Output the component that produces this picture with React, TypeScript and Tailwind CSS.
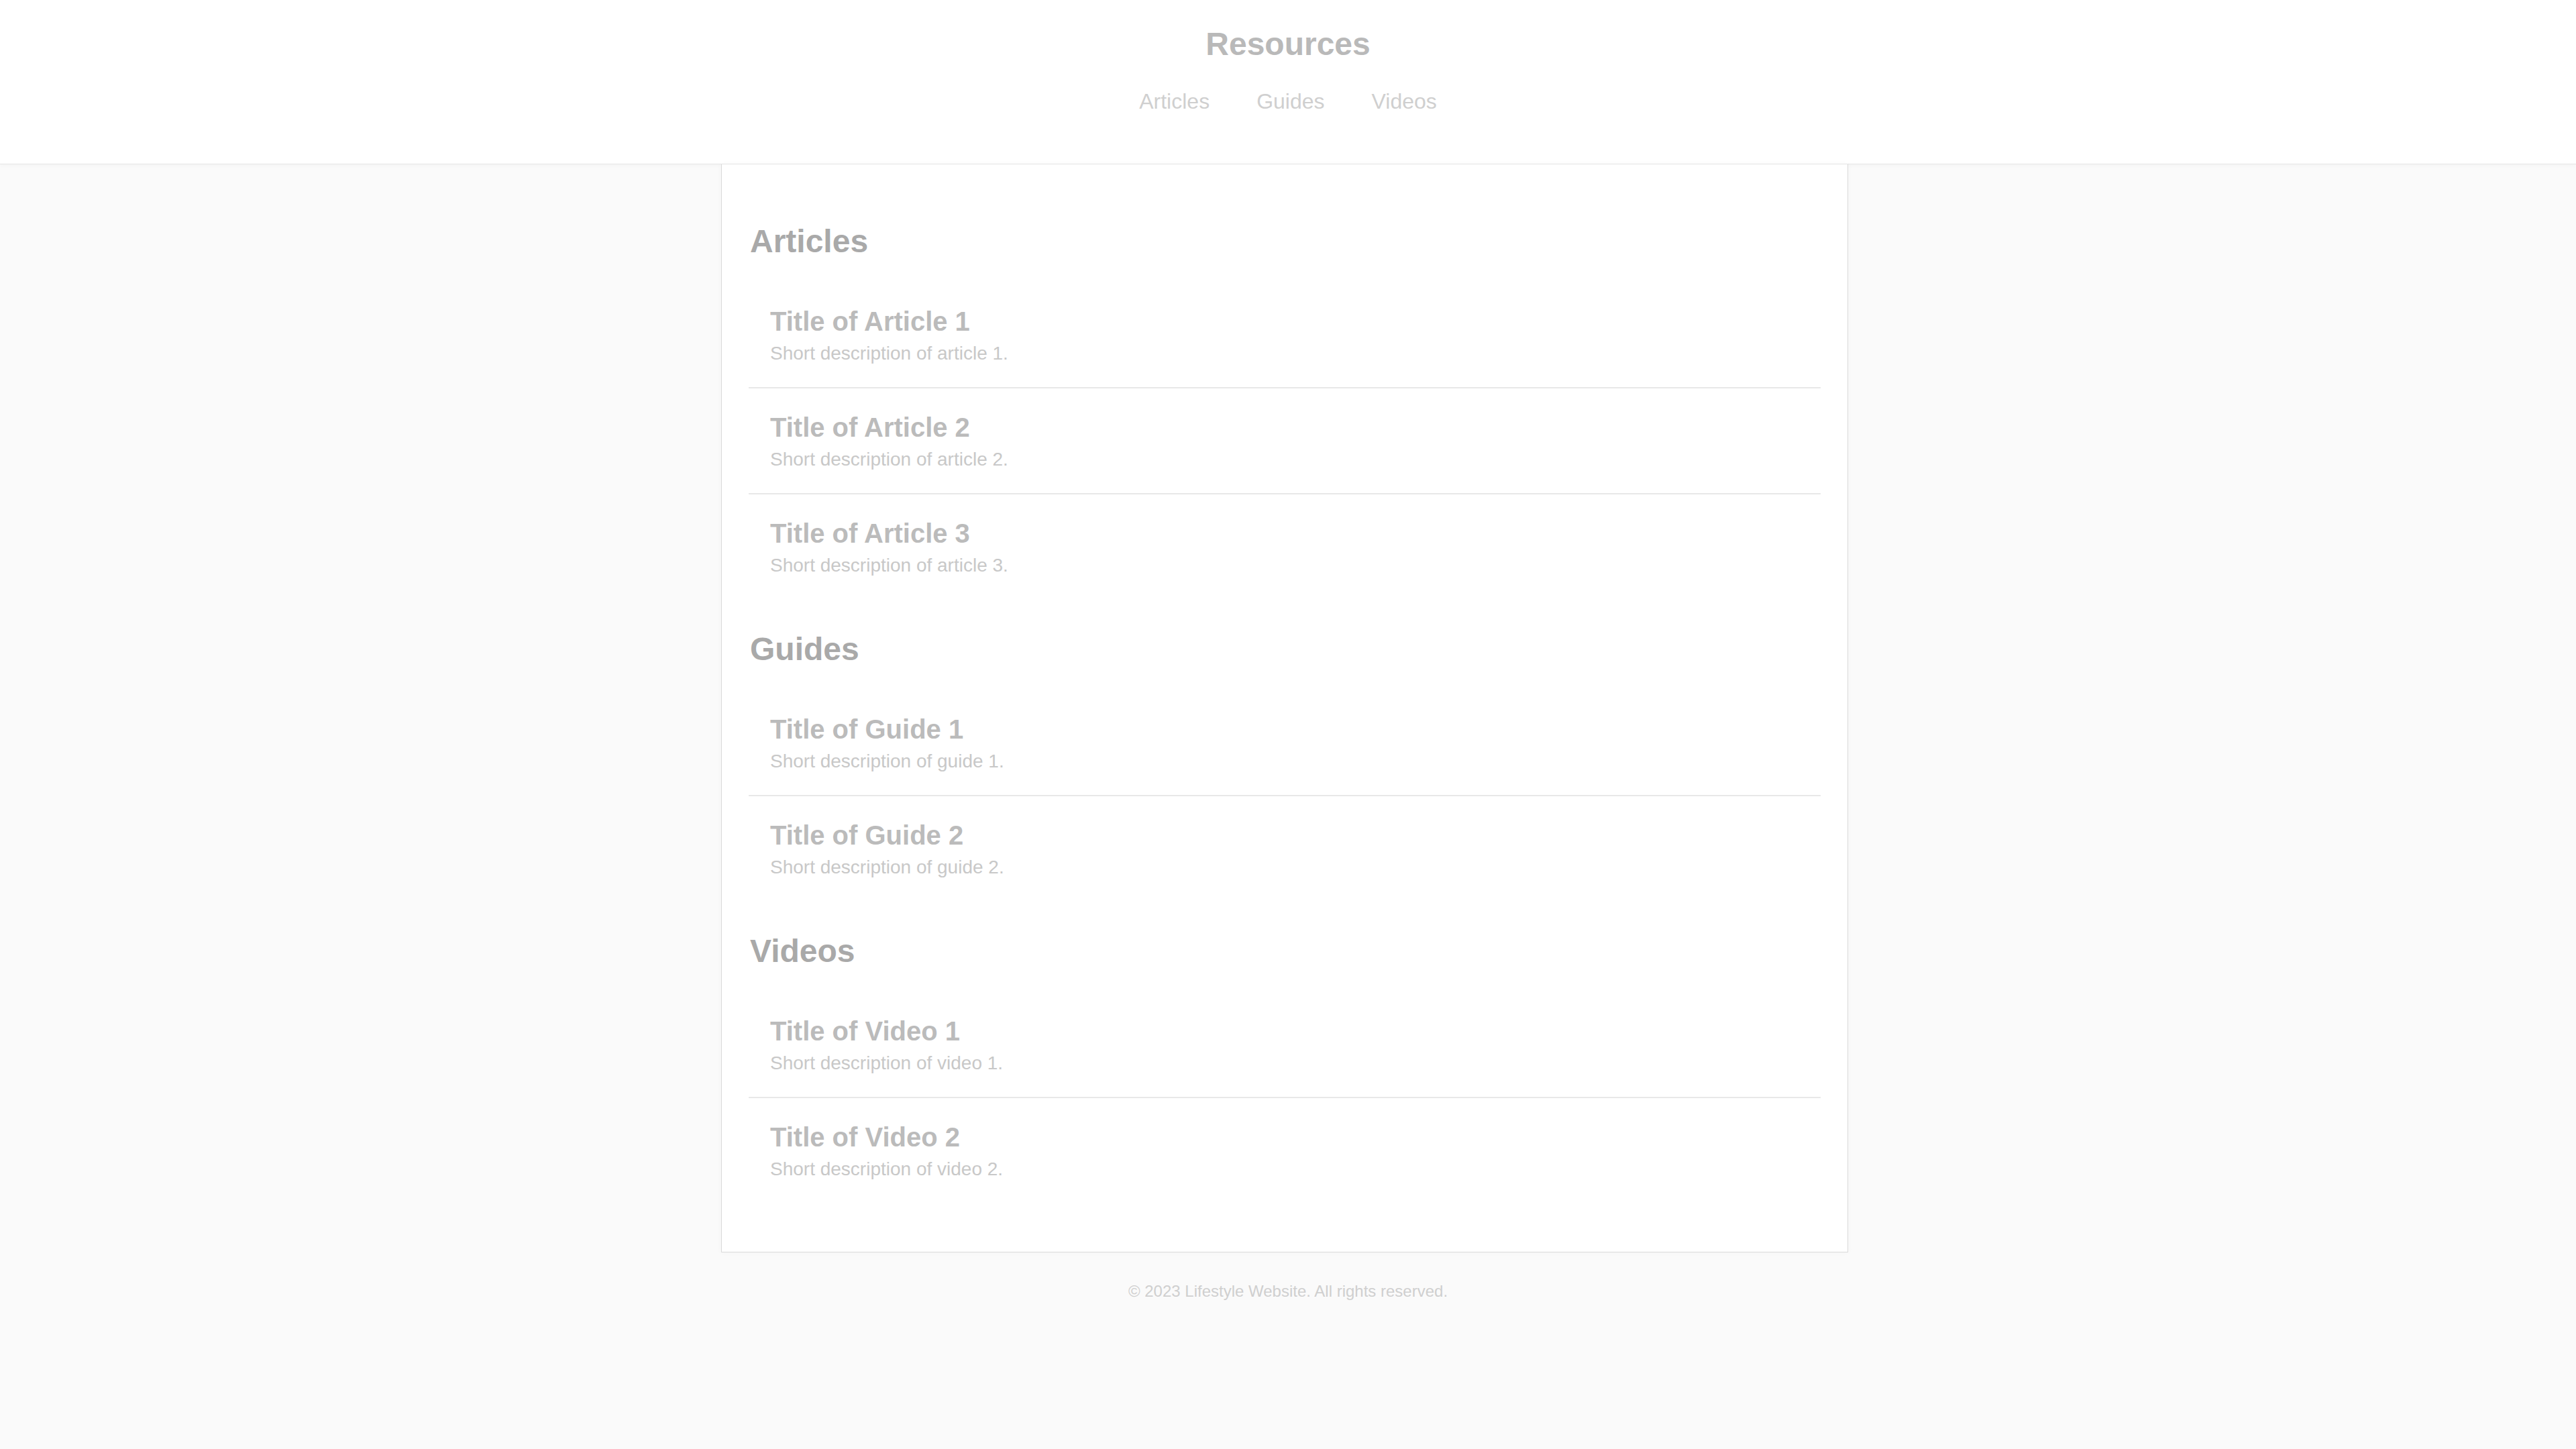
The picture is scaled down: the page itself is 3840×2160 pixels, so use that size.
import React from "react";

type Item = { title: string; desc: string };
type Section = { id: string; name: string; items: Item[] };

const sections: Section[] = [
  {
    id: "articles",
    name: "Articles",
    items: [
      { title: "Title of Article 1", desc: "Short description of article 1." },
      { title: "Title of Article 2", desc: "Short description of article 2." },
      { title: "Title of Article 3", desc: "Short description of article 3." },
    ],
  },
  {
    id: "guides",
    name: "Guides",
    items: [
      { title: "Title of Guide 1", desc: "Short description of guide 1." },
      { title: "Title of Guide 2", desc: "Short description of guide 2." },
    ],
  },
  {
    id: "videos",
    name: "Videos",
    items: [
      { title: "Title of Video 1", desc: "Short description of video 1." },
      { title: "Title of Video 2", desc: "Short description of video 2." },
    ],
  },
];

export default function App() {
  return (
    <div
      className="min-h-screen bg-[#fafafa]"
      style={{ fontFamily: '"Liberation Sans", Arial, sans-serif' }}
    >
      <header className="bg-white border-b border-[#e6e6e6] shadow-[0_2px_6px_rgba(0,0,0,0.03)] pt-[38px] pb-[74px] text-center">
        <h1 className="text-[48px] leading-[55px] font-bold text-[#b9b9b9]">Resources</h1>
        <nav className="mt-[40px] flex justify-center gap-[70px] text-[32px] leading-[37px] text-[#cfcfcf]">
          <a href="#articles">Articles</a>
          <a href="#guides">Guides</a>
          <a href="#videos">Videos</a>
        </nav>
      </header>

      <div className="flex justify-center pr-[10px]">
        <main className="w-[1680px] bg-white border-x border-b border-[#dadada] shadow-[0_0_8px_rgba(0,0,0,0.03)] px-[40px] pt-[40px] pb-[40px]">
          {sections.map((s, si) => (
            <section
              key={s.id}
              id={s.id}
              className={si === sections.length - 1 ? "pb-[33px]" : ""}
            >
              <h2 className="mt-[47px] mb-[34px] pl-[2px] text-[48px] leading-[55px] font-bold text-[#a9a9a9]">
                {s.name}
              </h2>
              <div className="flex flex-col">
                {s.items.map((it, i) => (
                  <div
                    key={it.title}
                    className={
                      "px-[32px] pt-[35px] pb-[34px] " +
                      (i < s.items.length - 1 ? "border-b-2 border-[#e8e8e8]" : "")
                    }
                  >
                    <h3 className="text-[40px] leading-[46px] font-bold text-[#bbbbbb]">{it.title}</h3>
                    <p className="mt-[9px] text-[28px] leading-[32px] text-[#c8c8c8]">{it.desc}</p>
                  </div>
                ))}
              </div>
            </section>
          ))}
        </main>
      </div>

      <footer className="pt-[44px] pb-[40px] text-center text-[24px] leading-[28px] text-[#cfcfcf]">
        © 2023 Lifestyle Website. All rights reserved.
      </footer>
    </div>
  );
}
